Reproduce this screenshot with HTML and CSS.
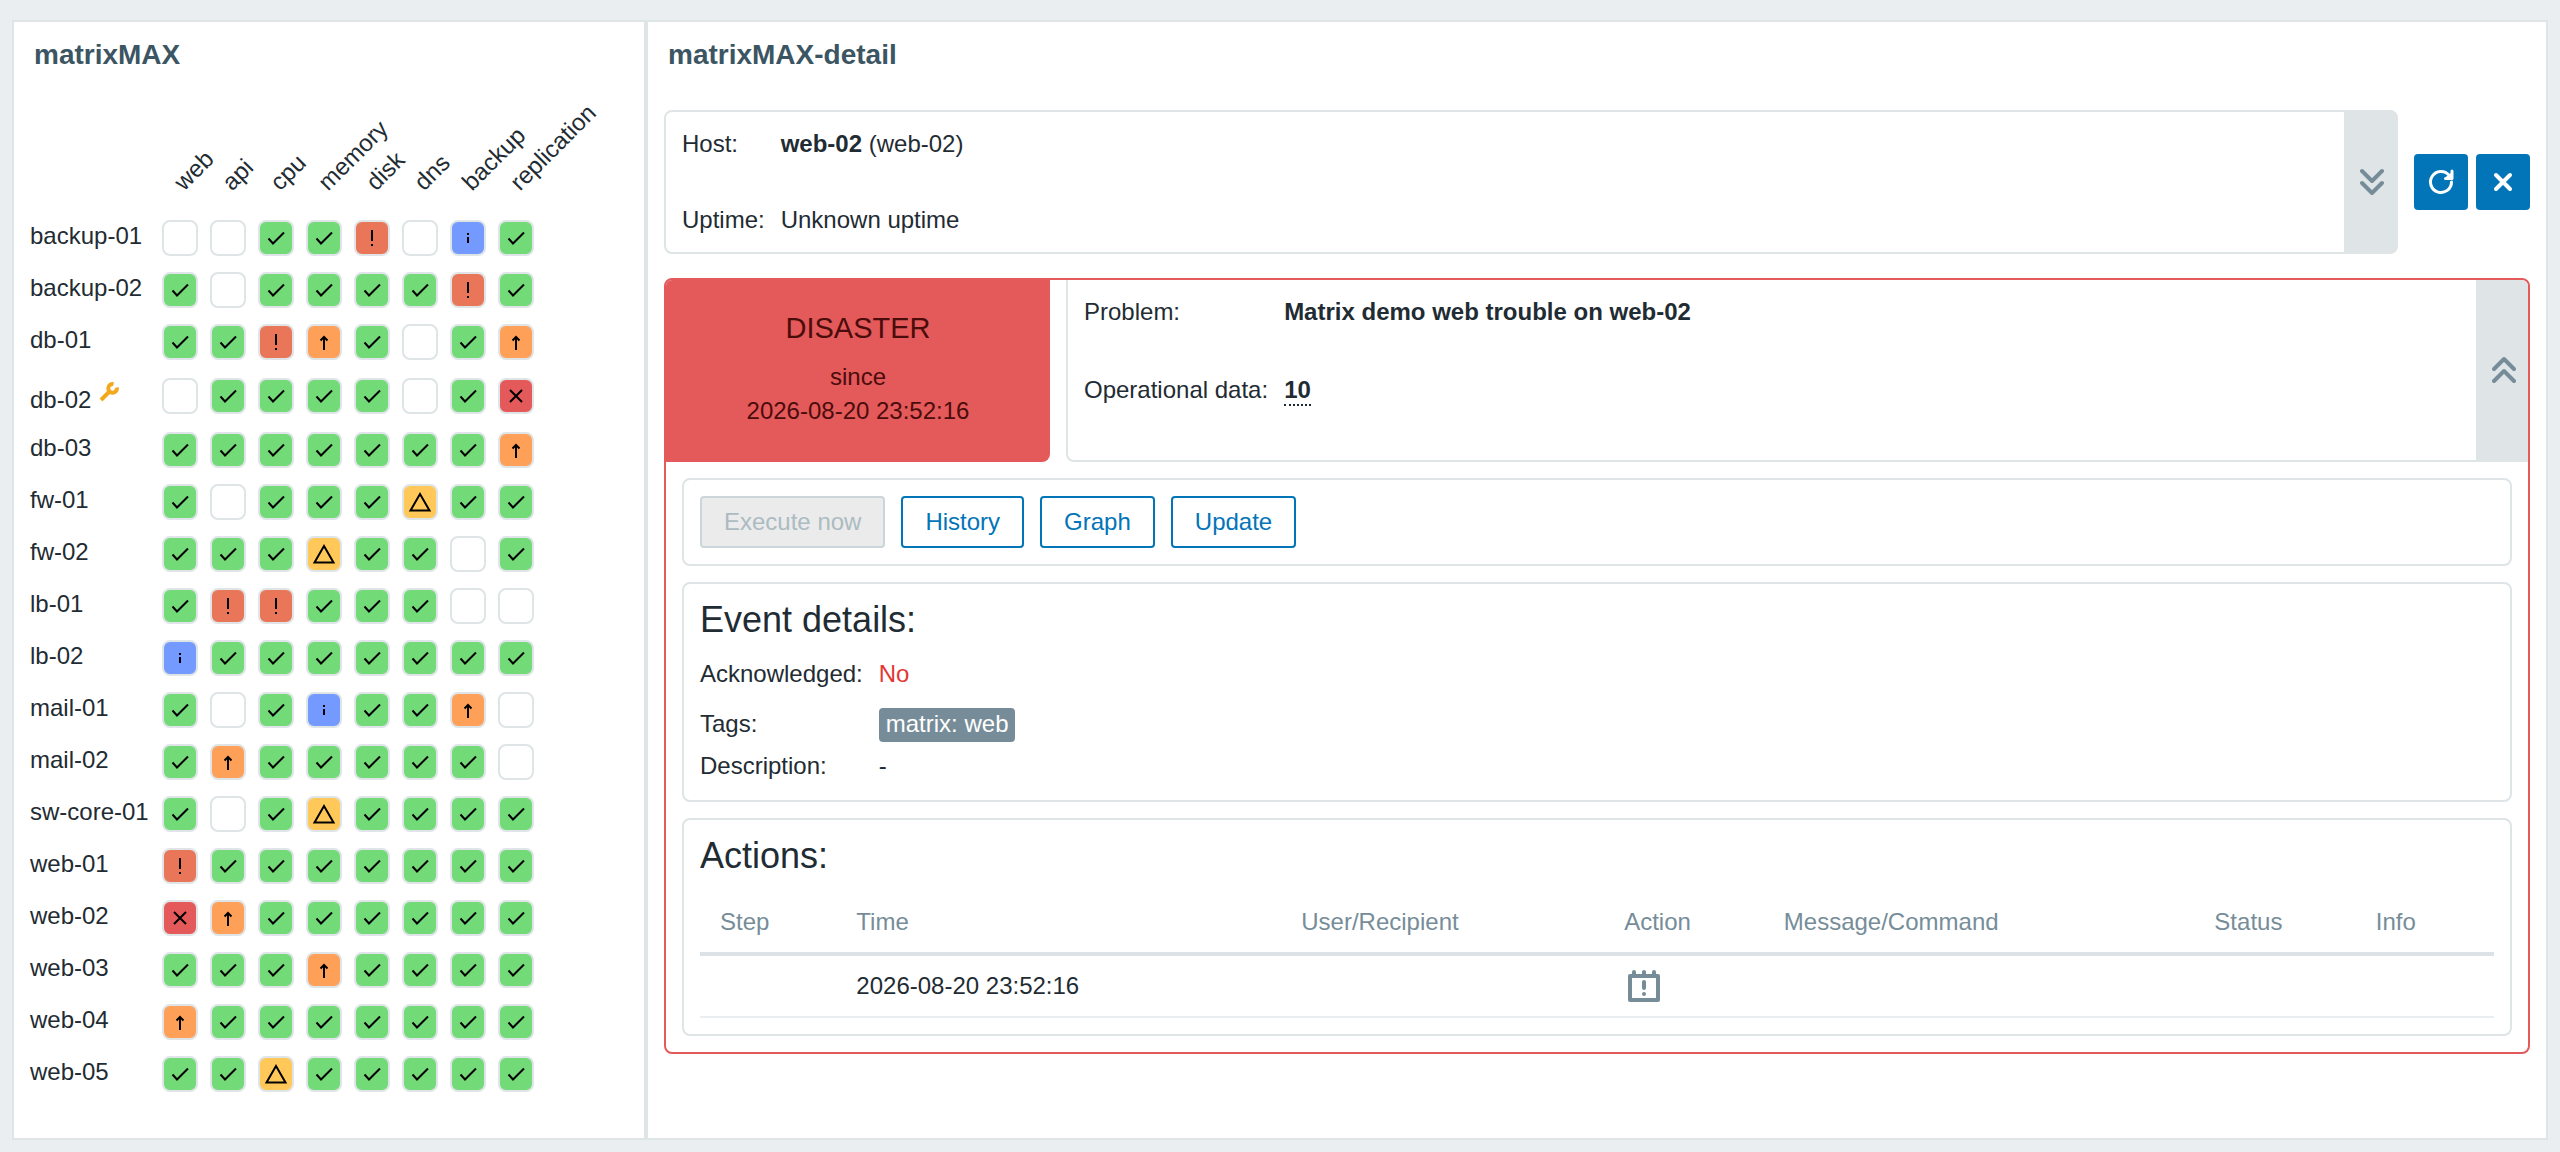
FILE: index.html
```html
<!DOCTYPE html>
<html lang="en">
<head>
<meta charset="utf-8">
<title>matrixMAX</title>
<link rel="stylesheet" href="styles.css">
</head>
<body>
<svg class="sprite" aria-hidden="true">
  <symbol id="ok" viewBox="0 0 32 32"><path d="M8.500 16.500l4.500 5L24 10.500"/></symbol>
  <symbol id="high" viewBox="0 0 32 32"><path d="M16 8v11M16 22v2"/></symbol>
  <symbol id="average" viewBox="0 0 32 32"><path d="M16 24V11M12.500 14.500L16 11l3.500 3.500" /></symbol>
  <symbol id="warning" viewBox="0 0 32 32"><path d="M16 8L25.500 24.500H6.500z"/></symbol>
  <symbol id="info" viewBox="0 0 32 32"><path d="M16 11v2M16 15v6"/></symbol>
  <symbol id="disaster" viewBox="0 0 32 32"><path d="M10 10l12 12M22 10L10 22"/></symbol>
</svg>
<main class="dashboard">
  <section class="widget widget-matrix">
    <h2 class="widget-title">matrixMAX</h2>
    <table class="matrix">
      <thead><tr id="matrix-head"><td class="host"></td></tr></thead>
      <tbody id="matrix-body"></tbody>
    </table>
  </section>
  <section class="widget widget-detail">
    <h2 class="widget-title">matrixMAX-detail</h2>
    <div class="detail">
      <div class="host-row">
        <div class="card host-card">
          <dl class="facts host-facts">
            <dt>Host:</dt><dd><b>web-02</b> (web-02)</dd>
            <dt>Uptime:</dt><dd>Unknown uptime</dd>
          </dl>
          <button class="toggle" aria-label="Expand host"><svg width="24" height="28" viewBox="0 0 24 28"><path d="M2 3l10 10L22 3M2 15l10 10L22 15"/></svg></button>
        </div>
        <button class="tool" aria-label="Refresh"><svg width="28" height="28" viewBox="0 0 28 28"><path d="M24.500 14A10.500 10.500 0 1 1 22 7.200M25 3v7.500h-6.500M20 10l5-4"/></svg></button>
        <button class="tool" aria-label="Close"><svg class="close" width="28" height="28" viewBox="0 0 28 28"><path d="M7 7l14 14M21 7L7 21"/></svg></button>
      </div>
      <article class="problem">
        <header class="problem-head">
          <div class="severity">
            <p class="severity-name">DISASTER</p>
            <p>since</p>
            <p>2026-08-20 23:52:16</p>
          </div>
          <div class="problem-card">
            <dl class="facts problem-facts">
              <dt>Problem:</dt><dd><b>Matrix demo web trouble on web-02</b></dd>
              <dt>Operational data:</dt><dd><b class="hint">10</b></dd>
            </dl>
            <button class="toggle" aria-label="Collapse problem"><svg width="24" height="28" viewBox="0 0 24 28"><path d="M2 13L12 3l10 10M2 25l10-10 10 10"/></svg></button>
          </div>
        </header>
        <div class="problem-body">
          <div class="card buttons">
            <button class="btn" disabled>Execute now</button>
            <button class="btn">History</button>
            <button class="btn">Graph</button>
            <button class="btn">Update</button>
          </div>
          <div class="card event">
            <h3>Event details:</h3>
            <dl class="facts event-facts">
              <dt>Acknowledged:</dt><dd class="no">No</dd>
              <dt class="tag-label">Tags:</dt><dd class="tag-value"><span class="tag">matrix: web</span></dd>
              <dt>Description:</dt><dd>-</dd>
            </dl>
          </div>
          <div class="card actions">
            <h3>Actions:</h3>
            <table class="action-list">
              <colgroup><col class="c-step"><col class="c-time"><col class="c-user"><col class="c-action"><col class="c-message"><col class="c-status"><col class="c-info"></colgroup>
              <thead><tr><th>Step</th><th>Time</th><th>User/Recipient</th><th>Action</th><th>Message/Command</th><th>Status</th><th>Info</th></tr></thead>
              <tbody><tr><td></td><td>2026-08-20 23:52:16</td><td></td><td class="action-icon"><svg width="32" height="32" viewBox="0 0 32 32" role="img" aria-label="Problem created"><path d="M2 6h28v24H2zM6 2v4M16 2v4M26 2v4M16 12v6M16 24v.1"/></svg></td><td></td><td></td><td></td></tr></tbody>
            </table>
          </div>
        </div>
      </article>
    </div>
  </section>
</main>
<script src="matrix.js"></script>
</body>
</html>
```
FILE: styles.css
```css
* { box-sizing: border-box; }
body { margin: 0; min-height: 100vh; display: flex; background: #ebeef0; color: #1f2c33; font: 24px/28px "Liberation Sans", Arial, sans-serif; }
h2, h3, p, dl, dd { margin: 0; }
button { font: inherit; margin: 0; padding: 0; cursor: pointer; }
svg { display: block; fill: none; stroke-linecap: round; stroke-linejoin: round; }
.sprite { position: absolute; width: 0; height: 0; }

.dashboard { flex: 1; display: grid; grid-template-columns: minmax(634px, 1fr) minmax(0, 3fr); padding: 20px 12px 12px; }
.widget { background: #fff; border: 2px solid #dfe4e7; }
.widget-title { padding: 17px 20px 15px; font-size: 28px; line-height: 32px; color: #3c5563; }

.matrix { table-layout: fixed; width: 516px; margin-left: 10px; border-collapse: collapse; }
.matrix th, .matrix td { padding: 8px 6px; width: 48px; }
.matrix thead th { height: 126px; padding: 0 0 25px 22px; vertical-align: bottom; font-weight: normal; text-align: left; }
.matrix thead span { display: block; width: max-content; transform: rotate(-45deg); transform-origin: 16px 20px; }
.matrix .host { width: 132px; padding-top: 10px; padding-bottom: 0; vertical-align: top; text-align: left; font-weight: normal; white-space: nowrap; }
.matrix .maintenance td { padding: 10px 6px; }
.matrix .maintenance .host { padding-top: 12px; padding-bottom: 0; }
.host-name { display: flex; gap: 8px; }
.maintenance .host-name span { padding-top: 6px; }
.wrench { margin-top: 2px; stroke: #f4a81d; stroke-width: 4; stroke-linecap: butt; }

.cell { display: block; width: 36px; height: 36px; border: 2px solid #dfe4e7; border-radius: 8px; background: #fff; }
.cell svg { width: 32px; height: 32px; stroke: #000; stroke-width: 2; stroke-linecap: butt; stroke-linejoin: miter; }
.cell.ok { background: #72db78; }
.cell.info { background: #7499ff; }
.cell.warning { background: #ffc859; }
.cell.average { background: #ffa059; }
.cell.high { background: #e97659; }
.cell.disaster { background: #e45959; }

.detail { display: flex; flex-direction: column; gap: 24px; padding: 24px 16px; }
.card { border: 2px solid #dfe4e7; border-radius: 8px; }
.host-row { display: flex; align-items: center; gap: 8px; }
.host-card { flex: 1; display: flex; justify-content: space-between; margin-right: 8px; }
.facts { display: grid; grid-template-columns: max-content auto; justify-content: start; column-gap: 16px; }
.host-facts { padding: 18px 16px; row-gap: 48px; }
.toggle { display: grid; place-items: center; width: 52px; padding-left: 4px; border: 0; background: #dfe4e7; }
.toggle svg { stroke: #768d99; stroke-width: 4; }
.tool { display: grid; place-items: center; width: 54px; height: 56px; border: 0; border-radius: 4px; background: #0275b8; }
.tool svg { stroke: #fff; stroke-width: 3; }
.tool .close { stroke-width: 4; }

.problem { border: 2px solid #e45959; border-radius: 8px; overflow: hidden; }
.problem-head { display: flex; gap: 16px; }
.severity { width: 384px; padding: 30px 16px 34px; border-radius: 0 0 8px 0; background: #e45959; color: #4b0c0c; text-align: center; line-height: 34px; }
.severity-name { margin-bottom: 14px; font-size: 29px; line-height: 36px; }
.problem-card { flex: 1; display: flex; justify-content: space-between; border: solid #dfe4e7; border-width: 0 0 2px 2px; border-radius: 0 0 0 8px; }
.problem-facts { align-content: start; padding: 18px 16px; row-gap: 50px; }
.hint { display: inline-block; border-bottom: 2px dotted #1f2c33; }

.problem-body { display: flex; flex-direction: column; gap: 16px; padding: 16px; }
.buttons { display: flex; gap: 16px; padding: 16px; }
.btn { height: 52px; padding: 0 22px; border: 2px solid #0275b8; border-radius: 4px; background: #fff; color: #0275b8; }
.btn:disabled { border-color: #ccd5d9; background: #ebebeb; color: #acbbc2; }
h3 { font-size: 36px; line-height: 40px; font-weight: normal; }
.event { padding: 16px 16px 20px; }
.event-facts { margin-top: 20px; row-gap: 10px; }
.tag-label { padding-top: 12px; }
.tag-value { display: flex; padding-top: 10px; }
.tag { padding: 2px 7px 4px; border-radius: 4px; background: #768d99; color: #fff; }
.no { color: #e33734; }
.actions { padding: 16px; }
.action-list { width: 100%; margin-top: 16px; table-layout: fixed; border-collapse: separate; border-spacing: 0; }
.action-list th, .action-list td { height: 62px; padding: 0 20px; text-align: left; font-weight: normal; }
.action-list th { height: 64px; border-bottom: 4px solid #dce2e6; color: #768d99; }
.action-list td { border-bottom: 2px solid #ebeef0; }
.action-icon svg { margin-left: 4px; stroke: #768d99; stroke-width: 4; }
.c-step { width: 7.6%; }
.c-time { width: 24.8%; }
.c-user { width: 18%; }
.c-action { width: 8.9%; }
.c-message { width: 24%; }
.c-status { width: 9%; }
```
FILE: matrix.js
```js
const columns = ["web", "api", "cpu", "memory", "disk", "dns", "backup", "replication"];
const states = { o: "ok", h: "high", a: "average", w: "warning", i: "info", d: "disaster" };
const hosts = [
  ["backup-01", "--ooh-io"],
  ["backup-02", "o-ooooho"],
  ["db-01", "oohao-oa"],
  ["db-02", "-oooo-od", true],
  ["db-03", "oooooooa"],
  ["fw-01", "o-ooowoo"],
  ["fw-02", "ooowoo-o"],
  ["lb-01", "ohhooo--"],
  ["lb-02", "iooooooo"],
  ["mail-01", "o-oiooa-"],
  ["mail-02", "oaooooo-"],
  ["sw-core-01", "o-owoooo"],
  ["web-01", "hooooooo"],
  ["web-02", "daoooooo"],
  ["web-03", "oooaoooo"],
  ["web-04", "aooooooo"],
  ["web-05", "oowooooo"]
];
const wrench = '<svg class="wrench" width="20" height="20" viewBox="0 0 20 20" role="img" aria-label="Maintenance"><path d="M14.500 2.200A4.300 4.300 0 1 0 17.800 5.500M10.500 9.500L2 18"/></svg>';

document.getElementById("matrix-head").innerHTML +=
  columns.map(name => `<th scope="col"><span>${name}</span></th>`).join("");

document.getElementById("matrix-body").innerHTML = hosts.map(([name, row, maintenance]) => {
  const cells = [...row].map(key => {
    const state = states[key];
    return state
      ? `<td><span class="cell ${state}"><svg role="img" aria-label="${state}"><use href="#${state}"/></svg></span></td>`
      : '<td><span class="cell"></span></td>';
  }).join("");
  return `<tr${maintenance ? ' class="maintenance"' : ""}><th scope="row" class="host"><div class="host-name"><span>${name}</span>${maintenance ? wrench : ""}</div></th>${cells}</tr>`;
}).join("");
```
